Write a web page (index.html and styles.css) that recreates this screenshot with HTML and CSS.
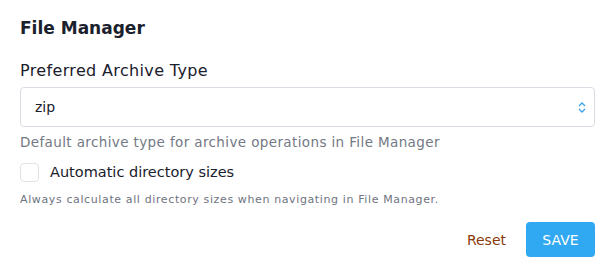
FILE: index.html
```html
<!DOCTYPE html>
<html lang="en">
<head>
    <meta charset="UTF-8">
    <title>File Manager</title>
    <link rel="stylesheet" href="styles.css">
</head>
<body>
    <div class="panel">
        <h2 class="panel-title">File Manager</h2>

        <label class="field-label" for="archiveType">Preferred Archive Type</label>
        <div class="select-wrap">
            <select id="archiveType" class="select">
                <option>zip</option>
                <option>tar</option>
                <option>tar.gz</option>
            </select>
            <svg class="select-arrows" width="8" height="11" viewBox="0 0 8 11">
                <path d="M1 4 L4 1 L7 4 M1 7 L4 10 L7 7" fill="none" stroke="#3aa0e6" stroke-width="1.3"/>
            </svg>
        </div>
        <p class="help">Default archive type for archive operations in File Manager</p>

        <label class="check-row" for="dirSizes">
            <input type="checkbox" id="dirSizes" class="check">
            <span>Automatic directory sizes</span>
        </label>
        <p class="help small">Always calculate all directory sizes when navigating in File Manager.</p>

        <div class="actions">
            <button type="button" class="btn-link">Reset</button>
            <button type="submit" class="btn-primary">SAVE</button>
        </div>
    </div>
</body>
</html>
```

FILE: styles.css
```css
body {
    margin: 0;
    background: #fff;
    font-family: "DejaVu Sans", sans-serif;
    color: #1a202c;
}

.panel {
    padding: 16px 19px 18px 20px;
}

.panel-title {
    margin: 0 0 20px;
    font-size: 17px;
    font-weight: bold;
    line-height: 24px;
}

.field-label {
    display: block;
    font-size: 16px;
    line-height: 22px;
    letter-spacing: 0.35px;
    margin-bottom: 5px;
}

.select-wrap {
    position: relative;
}

.select {
    width: 100%;
    height: 40px;
    padding: 0 14px;
    border: 1px solid #d9dde3;
    border-radius: 4px;
    background: #fff;
    font-family: inherit;
    font-size: 14px;
    color: #1a202c;
    appearance: none;
}

.select-arrows {
    position: absolute;
    right: 9px;
    top: 15px;
}

.help {
    margin: 5px 0 10px;
    font-size: 13.5px;
    line-height: 20px;
    letter-spacing: 0.38px;
    color: #737984;
}

.check-row {
    display: flex;
    align-items: center;
    gap: 11px;
    font-size: 14.5px;
    line-height: 20px;
}

.check {
    margin: 0;
    width: 19px;
    height: 19px;
    border: 1px solid #dfe2e7;
    border-radius: 4px;
    appearance: none;
    background: #fff;
}

.help.small {
    margin: 10px 0 14px;
    font-size: 11px;
    line-height: 16px;
    letter-spacing: 0.62px;
    color: #6f7480;
}

.actions {
    display: flex;
    justify-content: flex-end;
    align-items: center;
    gap: 20px;
}

.btn-link {
    border: none;
    background: none;
    padding: 0;
    font-family: inherit;
    font-size: 14px;
    color: #8a3a0a;
}

.btn-primary {
    width: 69px;
    height: 35px;
    border: none;
    border-radius: 4px;
    background: #30a8f2;
    color: #fff;
    font-family: inherit;
    font-size: 14px;
}
```
